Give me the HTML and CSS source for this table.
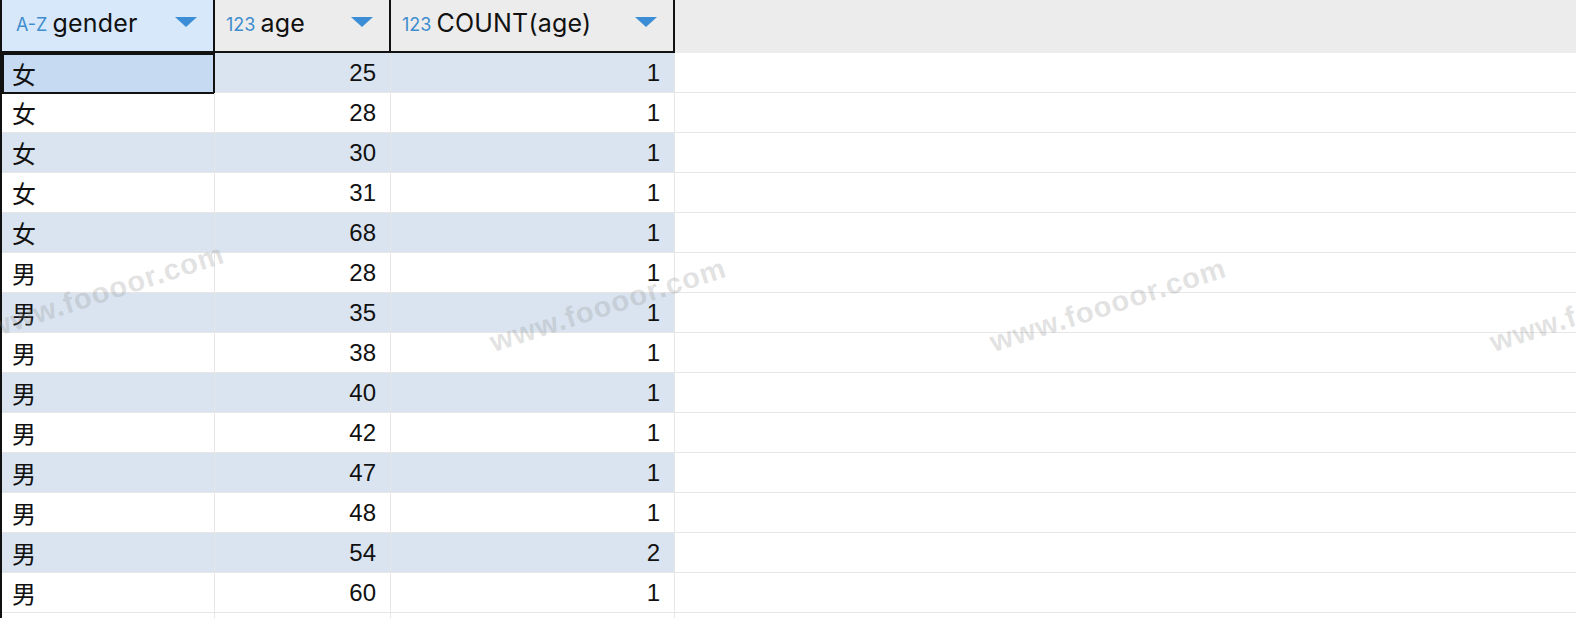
FILE: index.html
```html
<!DOCTYPE html>
<html>
<head>
<meta charset="utf-8">
<link rel="stylesheet" href="styles.css">
</head>
<body>
<div class="grid">
  <div class="row head">
    <div class="cell hc c1 active"><span class="type">A-Z</span><span class="name">gender</span><span class="tri"></span></div>
    <div class="cell hc c2"><span class="type">123</span><span class="name">age</span><span class="tri"></span></div>
    <div class="cell hc c3"><span class="type">123</span><span class="name">COUNT(age)</span><span class="tri"></span></div>
    <div class="fill"></div>
  </div>
  <div class="row odd"><div class="cell c1 txt sel">女</div><div class="cell c2 num">25</div><div class="cell c3 num">1</div><div class="fill"></div></div>
  <div class="row"><div class="cell c1 txt">女</div><div class="cell c2 num">28</div><div class="cell c3 num">1</div><div class="fill"></div></div>
  <div class="row odd"><div class="cell c1 txt">女</div><div class="cell c2 num">30</div><div class="cell c3 num">1</div><div class="fill"></div></div>
  <div class="row"><div class="cell c1 txt">女</div><div class="cell c2 num">31</div><div class="cell c3 num">1</div><div class="fill"></div></div>
  <div class="row odd"><div class="cell c1 txt">女</div><div class="cell c2 num">68</div><div class="cell c3 num">1</div><div class="fill"></div></div>
  <div class="row"><div class="cell c1 txt">男</div><div class="cell c2 num">28</div><div class="cell c3 num">1</div><div class="fill"></div></div>
  <div class="row odd"><div class="cell c1 txt">男</div><div class="cell c2 num">35</div><div class="cell c3 num">1</div><div class="fill"></div></div>
  <div class="row"><div class="cell c1 txt">男</div><div class="cell c2 num">38</div><div class="cell c3 num">1</div><div class="fill"></div></div>
  <div class="row odd"><div class="cell c1 txt">男</div><div class="cell c2 num">40</div><div class="cell c3 num">1</div><div class="fill"></div></div>
  <div class="row"><div class="cell c1 txt">男</div><div class="cell c2 num">42</div><div class="cell c3 num">1</div><div class="fill"></div></div>
  <div class="row odd"><div class="cell c1 txt">男</div><div class="cell c2 num">47</div><div class="cell c3 num">1</div><div class="fill"></div></div>
  <div class="row"><div class="cell c1 txt">男</div><div class="cell c2 num">48</div><div class="cell c3 num">1</div><div class="fill"></div></div>
  <div class="row odd"><div class="cell c1 txt">男</div><div class="cell c2 num">54</div><div class="cell c3 num">2</div><div class="fill"></div></div>
  <div class="row"><div class="cell c1 txt">男</div><div class="cell c2 num">60</div><div class="cell c3 num">1</div><div class="fill"></div></div>
  <div class="row tail"><div class="cell c1 txt"></div><div class="cell c2 num"></div><div class="cell c3 num"></div><div class="fill"></div></div>
</div>
<div class="wm w1">www.foooor.com</div>
<div class="wm w2">www.foooor.com</div>
<div class="wm w3">www.foooor.com</div>
<div class="wm w4">www.foooor.com</div>
</body>
</html>
```
FILE: styles.css
```css
html, body {
  margin: 0;
  padding: 0;
  background: #ffffff;
  overflow: hidden;
  width: 1576px;
  height: 618px;
}
body {
  position: relative;
  font-family: "Liberation Sans", "Noto Sans CJK SC", sans-serif;
  color: #111;
}
.grid {
  display: flex;
  flex-direction: column;
  border-left: 2px solid #111;
  box-sizing: border-box;
  height: 618px;
  overflow: hidden;
}
.row {
  display: flex;
  height: 40px;
  flex: none;
  box-sizing: border-box;
  border-bottom: 1px solid #e6e6e6;
}
.row.tail { height: 5px; border-bottom: none; }
.row.head {
  height: 53px;
  background: #ececec;
  border-bottom: none;
}
.cell {
  flex: none;
  box-sizing: border-box;
  height: 100%;
  display: flex;
  align-items: center;
  border-right: 1px solid #e6e6e6;
}
.c1 { width: 213px; }
.c2 { width: 176px; }
.c3 { width: 284px; }
.fill { flex: 1; }
.hc {
  border-right: 2px solid #111;
  border-bottom: 2px solid #111;
  padding: 0 16px 6px 11px;
  font-family: "Inter", "Liberation Sans", sans-serif;
  font-size: 25px;
  color: #111;
}
.hc.c1 { padding-left: 14px; }
.hc.active { background: #d7e8fa; }
.type {
  font-size: 18px;
  color: #3f8dcc;
  margin-right: 5px;
  margin-top: 3px;
}
.name { flex: 1; letter-spacing: 0.2px; }
.tri {
  width: 0;
  height: 0;
  border-left: 11px solid transparent;
  border-right: 11px solid transparent;
  border-top: 10px solid #3b8ed6;
  margin-bottom: 1px;
}
.odd .cell { background: #dae4f0; }
.txt {
  font-family: "Noto Sans CJK SC", sans-serif;
  font-size: 24px;
  padding-left: 10px;
}
.num {
  justify-content: flex-end;
  padding-right: 14px;
  font-size: 24px;
}
.sel {
  background: #c6dbf2 !important;
  border: 2px solid #111;
  margin-bottom: -1px;
  height: 41px;
  padding-left: 8px;
}
.wm {
  position: absolute;
  font-family: "Liberation Sans", sans-serif;
  font-size: 29px;
  font-weight: bold;
  color: rgba(140, 140, 140, 0.25);
  letter-spacing: 1px;
  transform: rotate(-18deg);
  transform-origin: left bottom;
  white-space: nowrap;
  pointer-events: none;
}
.w1 { left: -6px; top: 312px; }
.w2 { left: 496px; top: 326px; }
.w3 { left: 996px; top: 326px; }
.w4 { left: 1496px; top: 326px; }
```
